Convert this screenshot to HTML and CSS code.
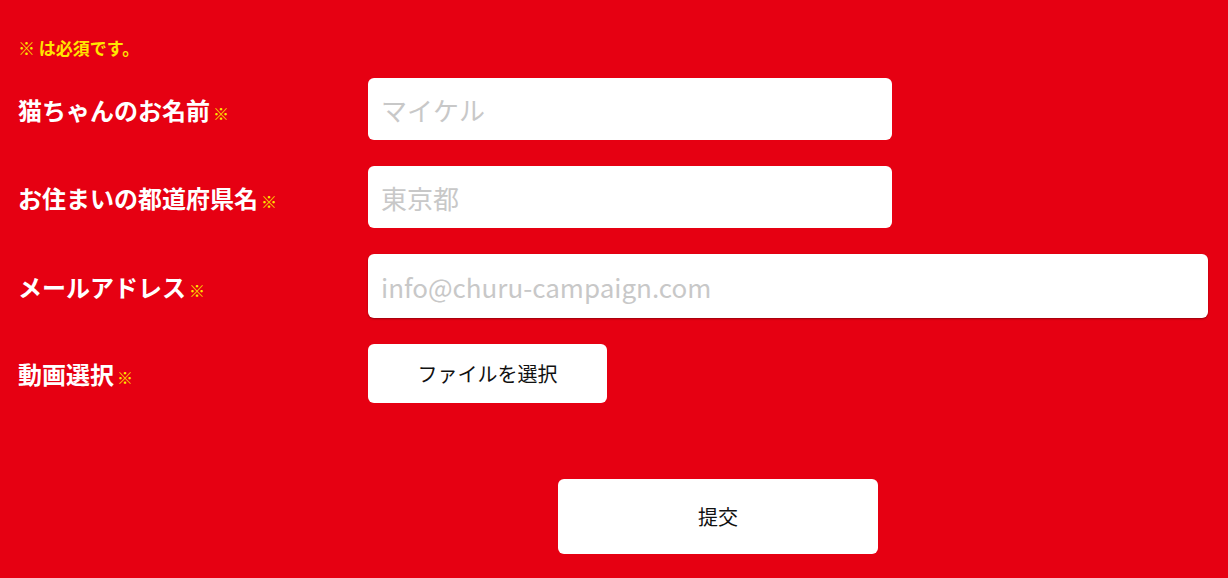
FILE: index.html
```html
<!DOCTYPE html>
<html lang="ja">
<head>
    <meta charset="UTF-8">
    <meta name="viewport" content="width=device-width, initial-scale=1.0">
    <title>応募フォーム</title>
    <link rel="stylesheet" href="styles.css">
</head>
<body>
    <main class="entry-form">
        <p class="note">※ は必須です。</p>
        <div class="row">
            <label class="label" for="cat-name">猫ちゃんのお名前<span class="req">※</span></label>
            <input class="field field-short" type="text" id="cat-name" placeholder="マイケル">
        </div>
        <div class="row">
            <label class="label" for="pref">お住まいの都道府県名<span class="req">※</span></label>
            <input class="field field-short" type="text" id="pref" placeholder="東京都">
        </div>
        <div class="row">
            <label class="label" for="mail">メールアドレス<span class="req">※</span></label>
            <input class="field field-wide" type="email" id="mail" placeholder="info@churu-campaign.com">
        </div>
        <div class="row">
            <span class="label">動画選択<span class="req">※</span></span>
            <label class="file-button">ファイルを選択<input type="file" class="file-input"></label>
        </div>
        <div class="submit-row">
            <button type="submit" class="submit-button">提交</button>
        </div>
    </main>
</body>
</html>
```

FILE: styles.css
```css
* {
    box-sizing: border-box;
}
body {
    margin: 0;
    background-color: #e60012;
    font-family: "Noto Sans CJK JP", "Noto Sans", sans-serif;
}
.entry-form {
    padding: 36px 20px 0 18px;
}
.note {
    margin: 0 0 18px;
    height: 24px;
    line-height: 24px;
    font-size: 17px;
    font-weight: bold;
    color: #ffe600;
}
.row {
    display: flex;
    align-items: center;
    margin-bottom: 26px;
}
.label {
    flex: 0 0 350px;
    font-size: 24px;
    font-weight: bold;
    color: #fff;
}
.req {
    margin-left: 3px;
    font-size: 16px;
    font-weight: normal;
    color: #ffe600;
}
.field {
    height: 62px;
    padding: 0 13px;
    border: none;
    border-radius: 6px;
    background: #fff;
    font-family: inherit;
    font-size: 26px;
    outline: none;
}
.field::placeholder {
    color: #c8c8c8;
}
.field-short {
    width: 524px;
}
.field-wide {
    flex: 1;
    height: 64px;
    box-shadow: 0 1px 2px rgba(0, 0, 0, .35);
}
.file-button {
    display: flex;
    align-items: center;
    justify-content: center;
    width: 239px;
    height: 59px;
    border-radius: 6px;
    background: #fff;
    font-size: 20px;
    color: #111;
    cursor: pointer;
}
.file-input {
    display: none;
}
.submit-row {
    padding: 50px 0 0 540px;
}
.submit-button {
    width: 320px;
    height: 75px;
    border: none;
    border-radius: 6px;
    background: #fff;
    font-family: inherit;
    font-size: 20px;
    color: #111;
    cursor: pointer;
}
```
